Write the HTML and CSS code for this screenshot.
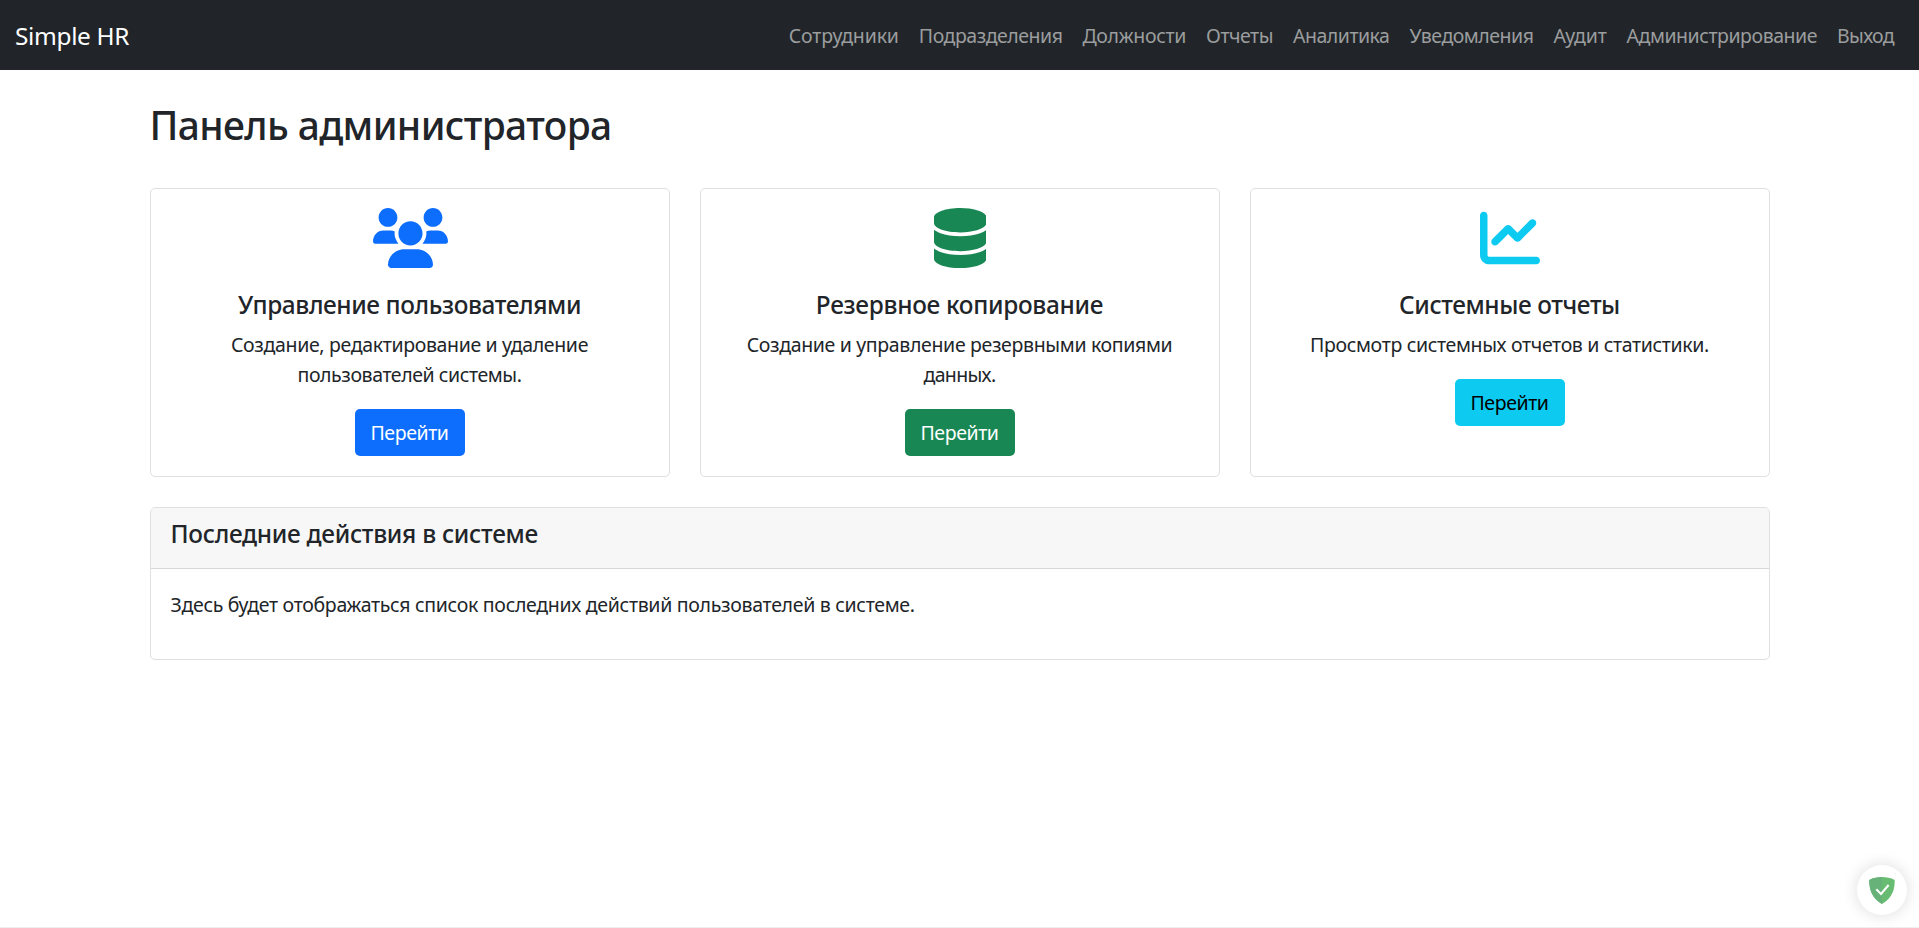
FILE: index.html
```html
<!DOCTYPE html>
<html lang="ru">
<head>
  <meta charset="utf-8">
  <title>Simple HR</title>
  <link rel="stylesheet" href="styles.css">
</head>
<body>
  <nav class="navbar">
    <a class="brand">Simple HR</a>
    <ul class="nav-list">
      <li>Сотрудники</li>
      <li>Подразделения</li>
      <li>Должности</li>
      <li>Отчеты</li>
      <li>Аналитика</li>
      <li>Уведомления</li>
      <li>Аудит</li>
      <li>Администрирование</li>
      <li>Выход</li>
    </ul>
  </nav>

  <main class="container">
    <h1 class="page-title">Панель администратора</h1>

    <div class="cards">
      <section class="card card-body centered">
        <svg class="icon primary" viewBox="0 0 640 512" width="75" height="60"><path d="M319.9 320c57.41 0 103.1-46.56 103.1-104c0-57.44-46.54-104-103.1-104c-57.41 0-103.1 46.56-103.1 104C215.9 273.4 262.5 320 319.9 320zM369.9 352H270.1C191.6 352 128 411.7 128 485.3C128 500.1 140.7 512 156.4 512h327.2C499.3 512 512 500.1 512 485.3C512 411.7 448.4 352 369.9 352zM512 160c44.18 0 80-35.82 80-80S556.2 0 512 0c-44.18 0-80 35.82-80 80S467.8 160 512 160zM183.9 216c0-5.449 .9824-10.63 1.609-15.91C174.6 194.1 162.6 192 149.9 192H88.08C39.44 192 0 233.8 0 285.3C0 295.6 7.887 304 17.62 304h199.5C196.7 280.2 183.9 249.7 183.9 216zM128 160c44.18 0 80-35.82 80-80S172.2 0 128 0C83.82 0 48 35.82 48 80S83.82 160 128 160zM551.9 192h-61.84c-12.8 0-24.88 3.037-35.86 8.24C454.8 205.5 455.8 210.6 455.8 216c0 33.71-12.78 64.21-33.16 88h199.7C632.1 304 640 295.6 640 285.3C640 233.8 600.6 192 551.9 192z"/></svg>
        <h2 class="card-title">Управление пользователями</h2>
        <p class="card-text">Создание, редактирование и удаление<br><span class="medium">пользователей системы.</span></p>
        <a class="btn btn-primary">Перейти</a>
      </section>

      <section class="card card-body centered">
        <svg class="icon success" viewBox="0 0 448 512" width="52.5" height="60"><path d="M448 80V128C448 172.2 347.7 208 224 208C100.3 208 0 172.2 0 128V80C0 35.82 100.3 0 224 0C347.7 0 448 35.82 448 80zM393.2 214.7C413.1 207.3 433.1 197.8 448 186.1V288C448 332.2 347.7 368 224 368C100.3 368 0 332.2 0 288V186.1C14.93 197.8 34.02 207.3 54.85 214.7C99.66 230.7 159.5 240 224 240C288.5 240 348.3 230.7 393.2 214.7zM54.85 374.7C99.66 390.7 159.5 400 224 400C288.5 400 348.3 390.7 393.2 374.7C413.1 367.3 433.1 357.8 448 346.1V432C448 476.2 347.7 512 224 512C100.3 512 0 476.2 0 432V346.1C14.93 357.8 34.02 367.3 54.85 374.7z"/></svg>
        <h2 class="card-title wide">Резервное копирование</h2>
        <p class="card-text">Создание и управление резервными копиями<br><span class="tight">данных.</span></p>
        <a class="btn btn-success">Перейти</a>
      </section>

      <section class="card card-body centered">
        <svg class="icon info" viewBox="0 0 512 512" width="60" height="60"><path d="M64 400C64 408.8 71.16 416 80 416H480C497.7 416 512 430.3 512 448C512 465.7 497.7 480 480 480H80C35.82 480 0 444.2 0 400V64C0 46.33 14.33 32 32 32C49.67 32 64 46.33 64 64V400zM342.6 278.6C330.1 291.1 309.9 291.1 297.4 278.6L240 221.3L150.6 310.6C138.1 323.1 117.9 323.1 105.4 310.6C92.88 298.1 92.88 277.9 105.4 265.4L217.4 153.4C229.9 140.9 250.1 140.9 262.6 153.4L320 210.7L425.4 105.4C437.9 92.88 458.1 92.88 470.6 105.4C483.1 117.9 483.1 138.1 470.6 150.6L342.6 278.6z"/></svg>
        <h2 class="card-title">Системные отчеты</h2>
        <p class="card-text">Просмотр системных отчетов и статистики.</p>
        <a class="btn btn-info">Перейти</a>
      </section>
    </div>

    <section class="card activity">
      <header class="card-header"><h2 class="card-title wide">Последние действия в системе</h2></header>
      <div class="card-body"><p class="card-text">Здесь будет отображаться список последних действий пользователей в системе.</p></div>
    </section>
  </main>

  <div class="shield-badge">
    <svg viewBox="0 0 26 27" width="26" height="27">
      <path fill="#68bc71" d="M13 0C9 0 4.200.9.3 2.900.3 12 2 20 13 27 24 20 25.700 12 25.700 2.900 21.800.9 17 0 13 0z"/>
      <path fill="#67b279" d="M13 0C9 0 4.200.9.3 2.900.3 12 2 20 13 27z"/>
      <path fill="none" stroke="#fff" stroke-width="2" d="M7.300 12.200l4.700 4.800 7.600-9"/>
    </svg>
  </div>
</body>
</html>
```
FILE: styles.css
```css
* { box-sizing: border-box; }

body {
  margin: 0;
  min-height: 928px;
  background: #fff;
  border-bottom: 1px solid #f1eeee;
  color: #212529;
  font: 400 19.5px/30px "Noto Sans", "Open Sans", sans-serif;
}

h1, h2, p, ul { margin: 0; padding: 0; }

.navbar {
  display: flex;
  align-items: center;
  justify-content: space-between;
  height: 70px;
  padding: 0 15px;
  background: #212529;
}

.brand {
  padding-top: 1px;
  color: #fff;
  font-size: 24.4px;
  line-height: 38px;
  letter-spacing: -0.34px;
}

.nav-list {
  display: flex;
  list-style: none;
  color: #9b9d9e;
}

.nav-list li { padding: 1px 10px 0; letter-spacing: -0.48px; }
.nav-list li:nth-child(1) { letter-spacing: -0.15px; }
.nav-list li:nth-child(3) { letter-spacing: -0.31px; }
.nav-list li:nth-child(7) { letter-spacing: -0.2px; }
.nav-list li:nth-child(8) { letter-spacing: -0.45px; }
.nav-list li:nth-child(9) { letter-spacing: -0.67px; }

.container {
  width: 1620px;
  margin: 0 auto;
  padding-top: 31px;
}

.page-title {
  margin-bottom: 39px;
  font-size: 39px;
  font-weight: 500;
  line-height: 48px;
  letter-spacing: -0.64px;
}

.cards {
  display: grid;
  grid-template-columns: repeat(3, 1fr);
  gap: 30px;
  margin-bottom: 30px;
}

.card {
  background: #fff;
  border: 1px solid #dfdfdf;
  border-radius: 5px;
}

.card-body { padding: 20px; }

.centered {
  display: flex;
  flex-direction: column;
  align-items: center;
  height: 289px;
  padding-top: 19px;
  text-align: center;
}

.icon { display: block; margin: 0 0 21px 1px; fill: currentColor; }
.primary { color: #0d6efd; }
.success { color: #198754; }
.info { color: #0dcaf0; }

.card-title {
  margin-bottom: 10px;
  padding-top: 1px;
  font-size: 24.4px;
  font-weight: 500;
  line-height: 29px;
  letter-spacing: -0.4px;
}

.card-title.wide { letter-spacing: -0.29px; }

.card-text {
  padding-top: 1px;
  margin-bottom: 19px;
  letter-spacing: -0.34px;
}
.medium { letter-spacing: -0.42px; }
.tight { letter-spacing: -0.67px; }

.btn {
  width: 110px;
  height: 47px;
  padding-top: 9px;
  border-radius: 5px;
  letter-spacing: -0.42px;
}

.btn-primary { background: #0d6efd; color: #fff; }
.btn-success { background: #198754; color: #fff; }
.btn-info { background: #0dcaf0; color: #000; }

.card-header {
  height: 61px;
  padding: 10px 20px;
  background: #f7f7f7;
  border-bottom: 1px solid #d8d8d8;
  border-radius: 4px 4px 0 0;
}

.activity { height: 153px; }
.activity .card-text { letter-spacing: -0.3px; }

.shield-badge {
  position: absolute;
  right: 12px;
  bottom: 13px;
  display: grid;
  place-items: center;
  width: 50px;
  height: 50px;
  border-radius: 50%;
  background: #fff;
  box-shadow: 0 0 16px rgba(0, 0, 0, 0.14);
}
```
